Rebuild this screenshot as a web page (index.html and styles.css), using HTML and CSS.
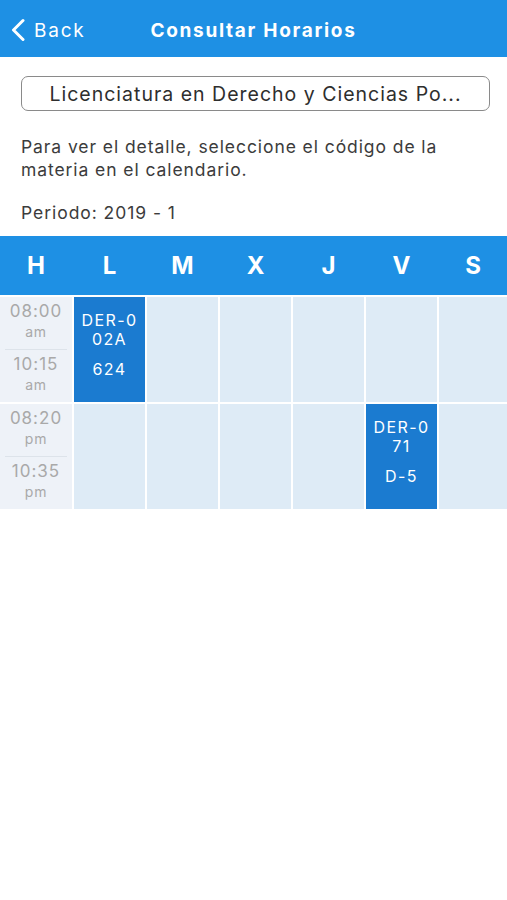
FILE: index.html
```html
<!DOCTYPE html>
<html lang="es">
<head>
    <meta charset="UTF-8">
    <meta name="viewport" content="width=device-width, initial-scale=1.0">
    <title>Consultar Horarios</title>
    <link rel="stylesheet" href="styles.css">
</head>
<body>
    <!-- Navigation bar -->
    <div class="nav-bar">
        <a class="back-link" href="#">
            <svg class="back-icon" width="14" height="24" viewBox="0 0 14 24">
                <path d="M12 2.5 L2.5 12 L12 21.5" fill="none" stroke="#fff" stroke-width="3" stroke-linecap="round" stroke-linejoin="round"/>
            </svg>
            <span>Back</span>
        </a>
        <h1 class="nav-title">Consultar Horarios</h1>
    </div>

    <!-- Career selector -->
    <div class="content">
        <button class="career-button">Licenciatura en Derecho y Ciencias Po...</button>
        <p class="hint">Para ver el detalle, seleccione el código de la materia en el calendario.</p>
        <p class="period">Periodo: 2019 - 1</p>
    </div>

    <!-- Schedule grid -->
    <div class="schedule">
        <div class="day-row">
            <div class="day">H</div>
            <div class="day">L</div>
            <div class="day">M</div>
            <div class="day">X</div>
            <div class="day">J</div>
            <div class="day">V</div>
            <div class="day">S</div>
        </div>

        <div class="slot-row">
            <div class="time-cell">
                <div class="time-half"><span class="time">08:00</span><span class="meridian">am</span></div>
                <div class="time-half"><span class="time">10:15</span><span class="meridian">am</span></div>
            </div>
            <div class="cell course">
                <span class="code">DER-0<br>02A</span>
                <span class="room">624</span>
            </div>
            <div class="cell"></div>
            <div class="cell"></div>
            <div class="cell"></div>
            <div class="cell"></div>
            <div class="cell"></div>
        </div>

        <div class="slot-row">
            <div class="time-cell">
                <div class="time-half"><span class="time">08:20</span><span class="meridian">pm</span></div>
                <div class="time-half"><span class="time">10:35</span><span class="meridian">pm</span></div>
            </div>
            <div class="cell"></div>
            <div class="cell"></div>
            <div class="cell"></div>
            <div class="cell"></div>
            <div class="cell course">
                <span class="code">DER-0<br>71</span>
                <span class="room">D-5</span>
            </div>
            <div class="cell"></div>
        </div>
    </div>
</body>
</html>
```

FILE: styles.css
```css
* {
    margin: 0;
    padding: 0;
    box-sizing: border-box;
}
body {
    font-family: 'Inter', 'Noto Sans', sans-serif;
    background-color: #fff;
    color: #3a3a3a;
}
.nav-bar {
    height: 57px;
    background-color: #1e90e4;
    display: flex;
    align-items: center;
    justify-content: center;
    position: relative;
}
.back-link {
    position: absolute;
    left: 11px;
    top: 18px;
    display: flex;
    align-items: center;
    gap: 9px;
    color: #fff;
    text-decoration: none;
    font-size: 19px;
    letter-spacing: 1.8px;
}
.nav-title {
    color: #fff;
    font-size: 19px;
    font-weight: 700;
    letter-spacing: 1.7px;
    margin-top: 4px;
}
.content {
    padding: 19px 21px 0 17px;
}
.career-button {
    display: block;
    width: 469px;
    margin-left: 4px;
    height: 35px;
    background-color: #fff;
    border: 1px solid #8a8a8a;
    border-radius: 7px;
    font-family: inherit;
    font-size: 19.5px;
    letter-spacing: 1px;
    color: #2e2e2e;
}
.hint {
    margin: 24px 0 0 4px;
    font-size: 17.5px;
    letter-spacing: 0.92px;
    line-height: 23px;
    color: #3c3c3c;
}
.period {
    margin: 20px 0 0 4px;
    font-size: 17.5px;
    letter-spacing: 0.95px;
    line-height: 23px;
    color: #3c3c3c;
}
.schedule {
    margin-top: 12px;
}
.day-row {
    display: grid;
    grid-template-columns: 72px repeat(5, 71px) 1fr;
    column-gap: 2px;
    height: 59px;
    background-color: #1e90e4;
    align-items: center;
}
.day {
    text-align: center;
    color: #fff;
    font-size: 24px;
    font-weight: 700;
}
.slot-row {
    display: grid;
    grid-template-columns: 72px repeat(5, 71px) 1fr;
    gap: 2px;
    height: 105px;
    margin-top: 2px;
}
.time-cell {
    background-color: #eef2f8;
    display: flex;
    flex-direction: column;
    padding: 0 5px;
}
.time-half {
    flex: 1;
    display: flex;
    flex-direction: column;
    align-items: center;
    justify-content: center;
    padding-bottom: 4px;
    color: #a9a9a9;
}
.time-half:first-child {
    border-bottom: 1px solid #dde3ea;
}
.time {
    font-size: 17px;
    letter-spacing: 1px;
    line-height: 22px;
}
.meridian {
    font-size: 14px;
    letter-spacing: 0.8px;
    line-height: 20px;
}
.cell {
    background-color: #deebf6;
}
.course {
    background-color: #1b7bd0;
    color: #fff;
    display: flex;
    flex-direction: column;
    align-items: center;
    padding-top: 14px;
    text-align: center;
}
.code {
    font-size: 16px;
    letter-spacing: 1.4px;
    line-height: 19px;
}
.room {
    margin-top: 11px;
    font-size: 16px;
    letter-spacing: 1.4px;
    line-height: 19px;
}
```
